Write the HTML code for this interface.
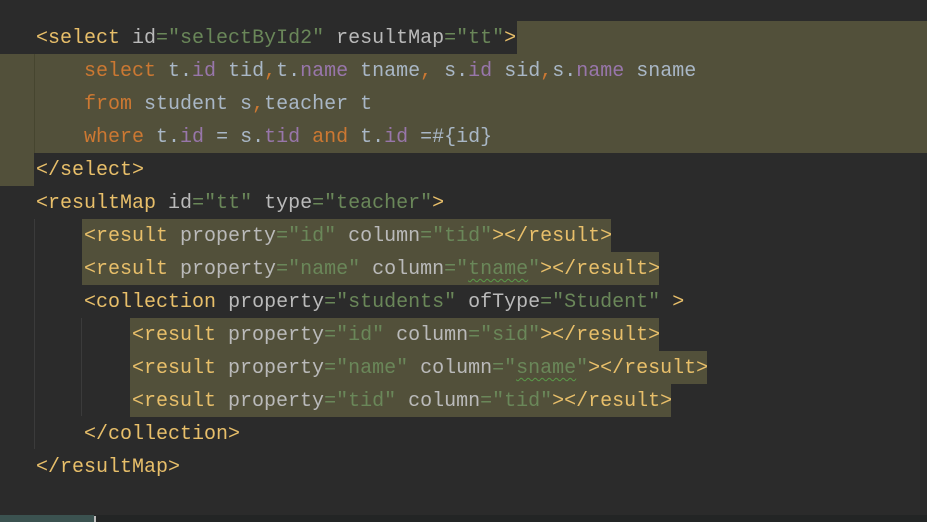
<!DOCTYPE html>
<html><head><meta charset="utf-8"><style>
html,body{margin:0;padding:0;background:#2b2b2b;width:927px;height:522px;overflow:hidden;position:relative}
.l{position:absolute;left:36px;height:33px;line-height:33px;font:20px "Liberation Mono",monospace;white-space:pre;color:#a9b7c6;transform:translateY(6px)}
.h{position:absolute;background:#52503a}
.t{color:#e8bf6a}.a{color:#bababa}.s{color:#6a8759}.k{color:#cc7832}.p{color:#9876aa}
.w{text-decoration:underline wavy #5a9a4a;text-underline-offset:4px;text-decoration-thickness:1px}
.g{position:absolute;width:1px;background:#3b3b3b}
</style></head><body>
<div class="h" style="left:517px;top:21px;width:410px;height:33px"></div>
<div class="h" style="left:34px;top:54px;width:893px;height:99px"></div>
<div class="h" style="left:0;top:54px;width:34px;height:132px"></div>
<div class="h" style="left:82px;top:219px;width:529px;height:33px"></div>
<div class="h" style="left:82px;top:252px;width:577px;height:33px"></div>
<div class="h" style="left:130px;top:318px;width:529px;height:33px"></div>
<div class="h" style="left:130px;top:351px;width:577px;height:33px"></div>
<div class="h" style="left:130px;top:384px;width:541px;height:33px"></div>
<div class="g" style="left:34px;top:54px;height:99px;background:#46452f"></div>
<div class="g" style="left:34px;top:219px;height:230px"></div>
<div class="g" style="left:81px;top:318px;height:98px"></div>

<div class="l" style="top:21px"><span class="t">&lt;select</span> <span class="a">id</span><span class="s">="selectById2"</span> <span class="a">resultMap</span><span class="s">="tt"</span><span class="t">&gt;</span></div>
<div class="l" style="top:54px">    <span class="k">select</span> t.<span class="p">id</span> tid<span class="k">,</span>t.<span class="p">name</span> tname<span class="k">,</span> s.<span class="p">id</span> sid<span class="k">,</span>s.<span class="p">name</span> sname</div>
<div class="l" style="top:87px">    <span class="k">from</span> student s<span class="k">,</span>teacher t</div>
<div class="l" style="top:120px">    <span class="k">where</span> t.<span class="p">id</span> = s.<span class="p">tid</span> <span class="k">and</span> t.<span class="p">id</span> =#{id}</div>
<div class="l" style="top:153px"><span class="t">&lt;/select&gt;</span></div>
<div class="l" style="top:186px"><span class="t">&lt;resultMap</span> <span class="a">id</span><span class="s">="tt"</span> <span class="a">type</span><span class="s">="teacher"</span><span class="t">&gt;</span></div>
<div class="l" style="top:219px">    <span class="t">&lt;result</span> <span class="a">property</span><span class="s">="id"</span> <span class="a">column</span><span class="s">="tid"</span><span class="t">&gt;&lt;/result&gt;</span></div>
<div class="l" style="top:252px">    <span class="t">&lt;result</span> <span class="a">property</span><span class="s">="name"</span> <span class="a">column</span><span class="s">="<span class="w">tname</span>"</span><span class="t">&gt;&lt;/result&gt;</span></div>
<div class="l" style="top:285px">    <span class="t">&lt;collection</span> <span class="a">property</span><span class="s">="students"</span> <span class="a">ofType</span><span class="s">="Student"</span> <span class="t">&gt;</span></div>
<div class="l" style="top:318px">        <span class="t">&lt;result</span> <span class="a">property</span><span class="s">="id"</span> <span class="a">column</span><span class="s">="sid"</span><span class="t">&gt;&lt;/result&gt;</span></div>
<div class="l" style="top:351px">        <span class="t">&lt;result</span> <span class="a">property</span><span class="s">="name"</span> <span class="a">column</span><span class="s">="<span class="w">sname</span>"</span><span class="t">&gt;&lt;/result&gt;</span></div>
<div class="l" style="top:384px">        <span class="t">&lt;result</span> <span class="a">property</span><span class="s">="tid"</span> <span class="a">column</span><span class="s">="tid"</span><span class="t">&gt;&lt;/result&gt;</span></div>
<div class="l" style="top:417px">    <span class="t">&lt;/collection&gt;</span></div>
<div class="l" style="top:450px"><span class="t">&lt;/resultMap&gt;</span></div>

<div style="position:absolute;left:0;top:515px;width:927px;height:7px;background:#232525"></div>
<div style="position:absolute;left:0;top:515px;width:94px;height:7px;background:#3b5250"></div>
<div style="position:absolute;left:94px;top:516px;width:2px;height:6px;background:#bbbbbb"></div>
</body></html>
